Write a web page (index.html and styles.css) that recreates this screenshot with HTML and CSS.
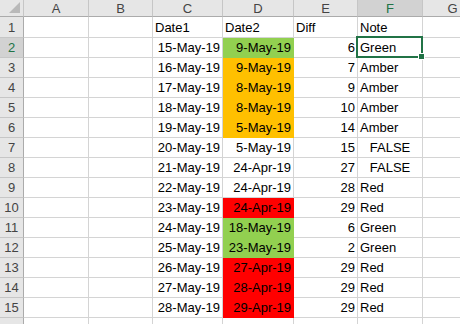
FILE: index.html
```html
<!DOCTYPE html>
<html>
<head>
<meta charset="utf-8">
<link rel="stylesheet" href="styles.css">
</head>
<body>
<div class="sheet">
  <div class="hd corner"><span class="tri"></span></div>
  <div class="hd col">A</div>
  <div class="hd col">B</div>
  <div class="hd col">C</div>
  <div class="hd col">D</div>
  <div class="hd col">E</div>
  <div class="hd col sel-col">F</div>
  <div class="hd col">G</div>

  <div class="hd row">1</div><div class="c"></div><div class="c"></div><div class="c l">Date1</div><div class="c l">Date2</div><div class="c l">Diff</div><div class="c l">Note</div><div class="c"></div>
  <div class="hd row sel-row">2</div><div class="c"></div><div class="c"></div><div class="c r">15-May-19</div><div class="c r green">9-May-19</div><div class="c r">6</div><div class="c l active">Green</div><div class="c"></div>
  <div class="hd row">3</div><div class="c"></div><div class="c"></div><div class="c r">16-May-19</div><div class="c r amber">9-May-19</div><div class="c r">7</div><div class="c l">Amber</div><div class="c"></div>
  <div class="hd row">4</div><div class="c"></div><div class="c"></div><div class="c r">17-May-19</div><div class="c r amber">8-May-19</div><div class="c r">9</div><div class="c l">Amber</div><div class="c"></div>
  <div class="hd row">5</div><div class="c"></div><div class="c"></div><div class="c r">18-May-19</div><div class="c r amber">8-May-19</div><div class="c r">10</div><div class="c l">Amber</div><div class="c"></div>
  <div class="hd row">6</div><div class="c"></div><div class="c"></div><div class="c r">19-May-19</div><div class="c r amber">5-May-19</div><div class="c r">14</div><div class="c l">Amber</div><div class="c"></div>
  <div class="hd row">7</div><div class="c"></div><div class="c"></div><div class="c r">20-May-19</div><div class="c r">5-May-19</div><div class="c r">15</div><div class="c m">FALSE</div><div class="c"></div>
  <div class="hd row">8</div><div class="c"></div><div class="c"></div><div class="c r">21-May-19</div><div class="c r">24-Apr-19</div><div class="c r">27</div><div class="c m">FALSE</div><div class="c"></div>
  <div class="hd row">9</div><div class="c"></div><div class="c"></div><div class="c r">22-May-19</div><div class="c r">24-Apr-19</div><div class="c r">28</div><div class="c l">Red</div><div class="c"></div>
  <div class="hd row">10</div><div class="c"></div><div class="c"></div><div class="c r">23-May-19</div><div class="c r red">24-Apr-19</div><div class="c r">29</div><div class="c l">Red</div><div class="c"></div>
  <div class="hd row">11</div><div class="c"></div><div class="c"></div><div class="c r">24-May-19</div><div class="c r green">18-May-19</div><div class="c r">6</div><div class="c l">Green</div><div class="c"></div>
  <div class="hd row">12</div><div class="c"></div><div class="c"></div><div class="c r">25-May-19</div><div class="c r green">23-May-19</div><div class="c r">2</div><div class="c l">Green</div><div class="c"></div>
  <div class="hd row">13</div><div class="c"></div><div class="c"></div><div class="c r">26-May-19</div><div class="c r red">27-Apr-19</div><div class="c r">29</div><div class="c l">Red</div><div class="c"></div>
  <div class="hd row">14</div><div class="c"></div><div class="c"></div><div class="c r">27-May-19</div><div class="c r red">28-Apr-19</div><div class="c r">29</div><div class="c l">Red</div><div class="c"></div>
  <div class="hd row">15</div><div class="c"></div><div class="c"></div><div class="c r">28-May-19</div><div class="c r red">29-Apr-19</div><div class="c r">29</div><div class="c l">Red</div><div class="c"></div>
  <div class="hd row"></div><div class="c"></div><div class="c"></div><div class="c"></div><div class="c"></div><div class="c"></div><div class="c"></div><div class="c"></div>
</div>
</body>
</html>
```
FILE: styles.css
```css
html, body {
  margin: 0;
  padding: 0;
  background: #ffffff;
  overflow: hidden;
}
.sheet {
  display: grid;
  grid-template-columns: 24px 65px 64px 70px 71px 64px 65px 60px;
  grid-template-rows: 17px 21px repeat(15, 20px);
  font-family: "Liberation Sans", Arial, sans-serif;
  font-size: 13px;
  color: #000;
  width: 460px;
}
.sheet > div {
  box-sizing: border-box;
  border-right: 1px solid #d4d4d4;
  border-bottom: 1px solid #d4d4d4;
  display: flex;
  align-items: flex-end;
  padding-bottom: 2px;
  white-space: nowrap;
  overflow: visible;
  line-height: 15px;
}
.hd {
  background: #e6e6e6;
  color: #444444;
  justify-content: center;
  font-size: 13px;
}
.sheet > .hd.col {
  border-right: 1px solid #c6c6c6;
  border-bottom: 1px solid #ababab;
  align-items: center;
  padding-bottom: 0;
}
.sheet > .hd.row {
  border-right: 1px solid #ababab;
  border-bottom: 1px solid #c6c6c6;
}
.sheet > .corner {
  position: relative;
  border-right: 1px solid #c6c6c6;
  border-bottom: 1px solid #ababab;
}
.tri {
  position: absolute;
  right: 3px;
  bottom: 3px;
  width: 0;
  height: 0;
  border-left: 11px solid transparent;
  border-bottom: 11px solid #b9b9b9;
}
.sheet > .sel-col {
  background: #d2d2d2;
  color: #217346;
  border-bottom: 2px solid #217346;
}
.sheet > .sel-row {
  background: #d2d2d2;
  color: #217346;
  border-right: 2px solid #217346;
}
.r {
  justify-content: flex-end;
  padding-right: 2px;
}
.l {
  justify-content: flex-start;
  padding-left: 2px;
}
.m {
  justify-content: center;
}
.sheet > .green {
  background: #92d050;
  border-color: #92d050;
}
.sheet > .amber {
  background: #ffc000;
  border-color: #ffc000;
}
.sheet > .red {
  background: #ff0000;
  border-color: #ff0000;
}
.active {
  position: relative;
}
.active::before {
  content: "";
  position: absolute;
  left: -2px;
  top: -2px;
  right: -1px;
  bottom: -1px;
  border: 2px solid #217346;
}
.active::after {
  content: "";
  position: absolute;
  right: -3px;
  bottom: -3px;
  width: 5px;
  height: 5px;
  background: #217346;
  border: 1px solid #ffffff;
}
```
